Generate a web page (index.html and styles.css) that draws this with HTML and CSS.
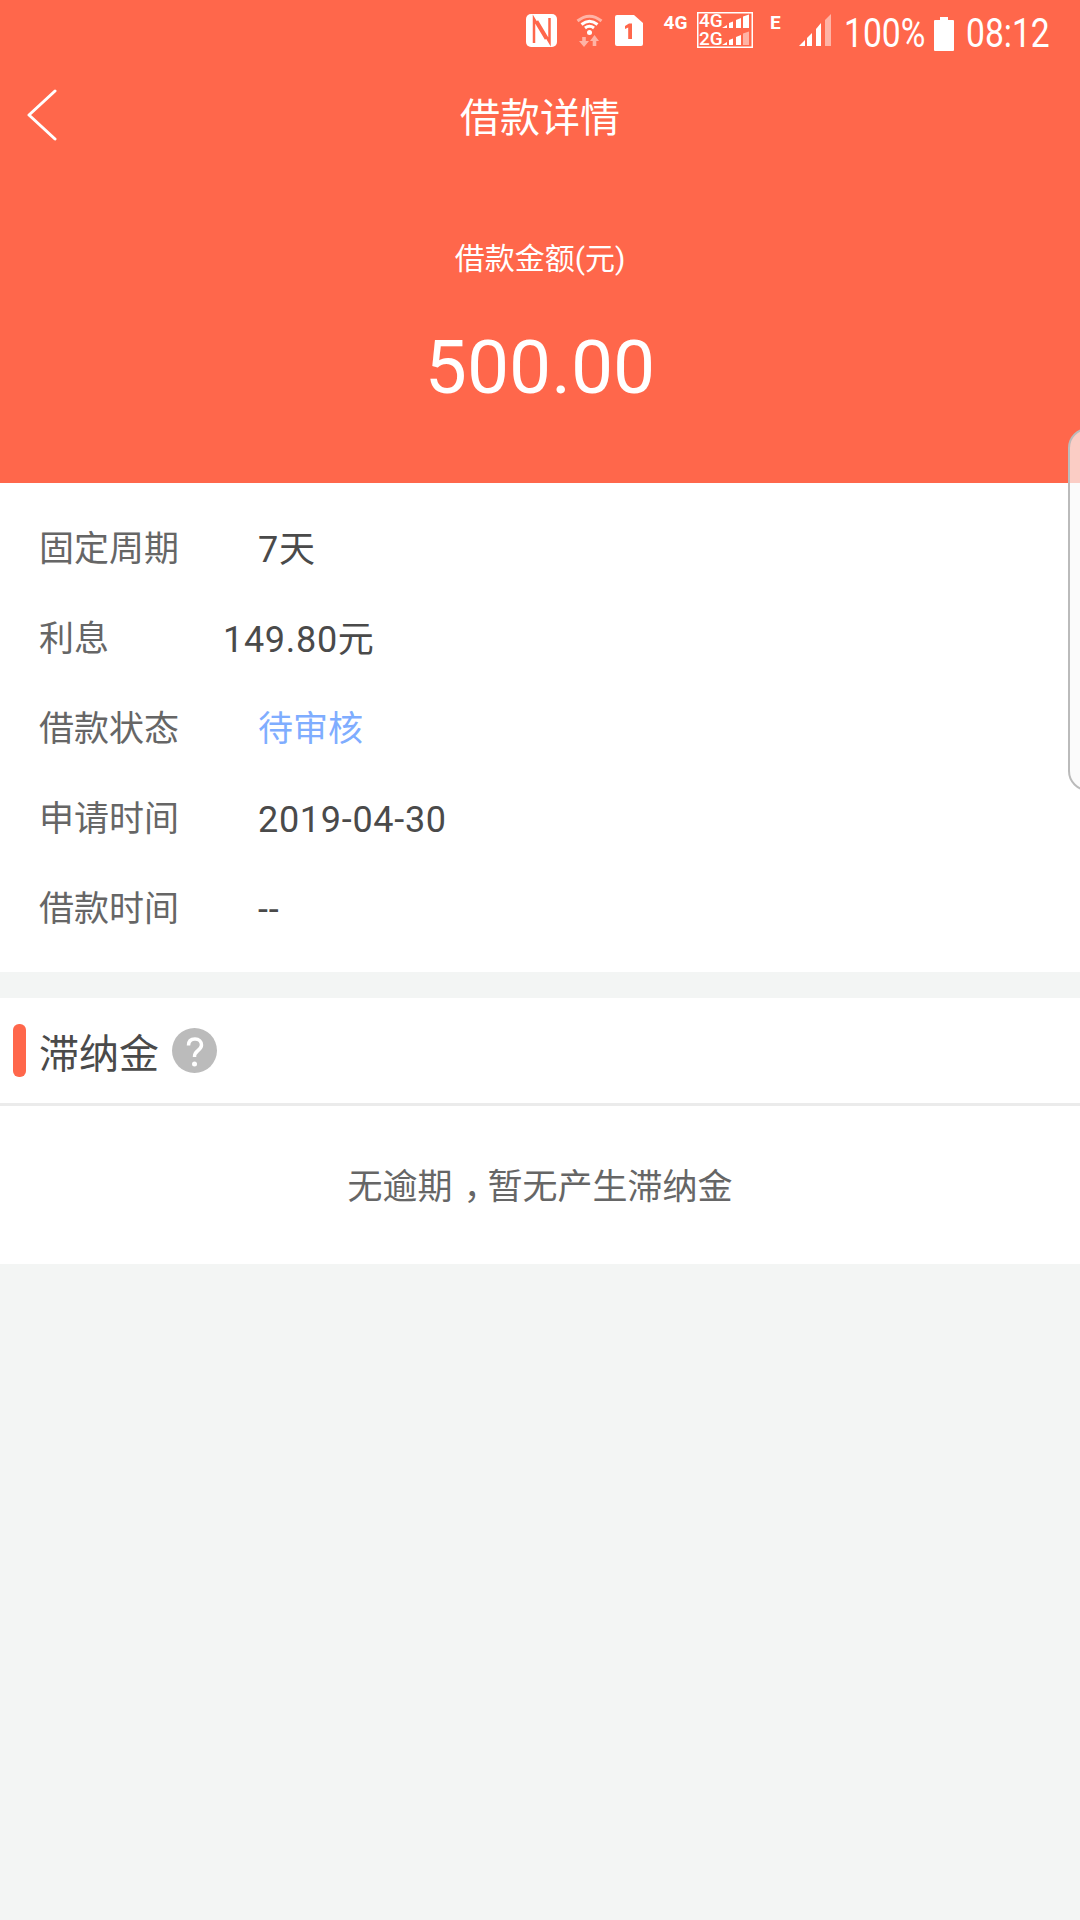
FILE: index.html
```html
<!DOCTYPE html>
<html lang="zh-CN">
<head>
    <meta charset="UTF-8">
    <meta name="viewport" content="width=device-width, initial-scale=1.0">
    <title>借款详情</title>
    <link rel="stylesheet" href="styles.css">
</head>
<body>

    <header class="cabecera">
        <div class="estado">
            <svg class="ico-nfc" width="31" height="33" viewBox="0 0 31 33">
                <rect width="31" height="33" rx="5" fill="#fff"/>
                <path d="M8 29V5L20 25" fill="none" stroke="#ff674b" stroke-width="2.500"/>
                <path d="M23.500 4V28L11 7" fill="none" stroke="#ff674b" stroke-width="2.500"/>
            </svg>
            <svg class="ico-wifi" width="27" height="33" viewBox="0 0 27 33">
                <path d="M1.500 7Q13.500 -2.500 25.500 7" fill="none" stroke="#ffb3a5" stroke-width="3"/>
                <path d="M5.500 10.500Q13.500 4 21.500 10.500" fill="none" stroke="#fff" stroke-width="3"/>
                <path d="M9 14Q13.500 10.500 18 14" fill="none" stroke="#fff" stroke-width="3"/>
                <circle cx="13.500" cy="18.500" r="2.500" fill="#fff"/>
                <path d="M8 33L3 27H6.200V23H9.800V27H13Z" fill="#ffb3a5"/>
                <path d="M18.500 21L23 27H20.300V32H16.700V27H14Z" fill="#ffb3a5"/>
            </svg>
            <svg class="ico-sim" width="28" height="31" viewBox="0 0 28 31">
                <path d="M2 0H19L28 8V29Q28 31 26 31H2Q0 31 0 29V2Q0 0 2 0Z" fill="#fff"/>
                <path d="M10 11L14 8.500H17V24H13.200V12.500L10 14Z" fill="#ff674b"/>
            </svg>
            <span class="red-4g">4G</span>
            <svg class="ico-dual" width="56" height="36" viewBox="0 0 56 36">
                <rect x="0.750" y="0.750" width="54.500" height="34.500" fill="none" stroke="#fff" stroke-width="1.500"/>
                <text class="dual-txt" x="2" y="15">4G</text>
                <text class="dual-txt" x="2" y="33">2G</text>
                <path d="M25 16L30 13V16ZM32 16V11L36 9.500V16ZM39 16V8L44 6V16ZM46 16V4.500L52 2.500V16Z" fill="#fff"/>
                <path d="M25 33L30 30V33ZM32 33V28L36 26.500V33ZM39 33V25L44 23V33Z" fill="#fff"/>
                <path d="M46 33V21.500L52 19.500V33Z" fill="#ffb3a5"/>
            </svg>
            <span class="red-e">E</span>
            <svg class="ico-senal" width="32" height="32" viewBox="0 0 32 32">
                <path d="M0 32L6 26V32Z" fill="#fff"/>
                <path d="M8 32V24L13 19V32Z" fill="#fff"/>
                <path d="M17 32V15L22 9V32Z" fill="#fff"/>
                <path d="M26 32V6L32 0V32Z" fill="#ffb3a5"/>
            </svg>
            <span class="txt-bateria"><span>100%</span></span>
            <div class="bateria"></div>
            <span class="txt-hora"><span>08:12</span></span>
        </div>

        <div class="barra">
            <svg class="atras" width="30" height="52" viewBox="0 0 30 52">
                <path d="M28 2L2 26L28 50" fill="none" stroke="#fff" stroke-width="3" stroke-linecap="round" stroke-linejoin="round"/>
            </svg>
            <h1 class="titulo">借款详情</h1>
        </div>

        <p class="sub-monto">借款金额(元)</p>
        <p class="monto">500.00</p>
    </header>

    <!-- Datos del préstamo -->
    <section class="detalle">
        <div class="fila">
            <span class="etiqueta">固定周期</span>
            <span class="valor">7天</span>
        </div>
        <div class="fila">
            <span class="etiqueta">利息</span>
            <span class="valor valor-corrido">149.80元</span>
        </div>
        <div class="fila">
            <span class="etiqueta">借款状态</span>
            <span class="valor valor-azul">待审核</span>
        </div>
        <div class="fila">
            <span class="etiqueta">申请时间</span>
            <span class="valor">2019-04-30</span>
        </div>
        <div class="fila">
            <span class="etiqueta">借款时间</span>
            <span class="valor">--</span>
        </div>
    </section>

    <section class="multa">
        <div class="multa-cabecera">
            <i class="marca"></i>
            <h2 class="multa-titulo">滞纳金</h2>
            <svg class="ayuda" width="45" height="45" viewBox="0 0 45 45">
                <circle cx="22.500" cy="22.500" r="22.500" fill="#bbb"/>
                <path d="M16.500 17.500C16.500 13 19 11 23 11C27 11 29.500 13.500 29.500 17C29.500 20 27.500 21.500 25.500 23C23.500 24.500 22.500 26 22.500 29" fill="none" stroke="#fff" stroke-width="3.500"/>
                <circle cx="22.500" cy="36" r="2.500" fill="#fff"/>
            </svg>
        </div>
        <p class="multa-texto">无逾期<span class="coma">，</span>暂无产生滞纳金</p>
    </section>

    <div class="panel-lateral"></div>

</body>
</html>
```

FILE: styles.css
```css
/* Estilos generales */
* {
    box-sizing: border-box;
}

body {
    margin: 0;
    height: 1920px;
    overflow: hidden;
    position: relative;
    background-color: #f3f5f4;
    font-family: Roboto, "Noto Sans CJK SC", sans-serif;
    color: #4a4a4a;
}

h1, h2, p {
    margin: 0;
    font-weight: 400;
}

/* Cabecera naranja */
.cabecera {
    height: 483px;
    background-color: #ff674b;
    color: #fff;
    text-align: center;
}

.estado {
    display: flex;
    align-items: flex-start;
    height: 66px;
    padding-left: 526px;
}

.ico-nfc { margin-top: 14px; }
.ico-wifi { margin: 14px 0 0 19px; }
.ico-sim { margin: 15px 0 0 12px; }
.ico-dual { margin: 12px 0 0 9px; overflow: visible; }
.ico-senal { margin: 14px 0 0 20px; }

.red-4g {
    width: 25px;
    margin: 13px 0 0 20px;
    font-size: 19px;
    font-weight: 700;
    line-height: 20px;
}

.red-e {
    width: 9px;
    margin: 13px 0 0 17px;
    font-size: 19px;
    font-weight: 700;
    line-height: 20px;
}

.dual-txt {
    font-size: 19px;
    font-weight: 500;
    fill: #fff;
}

.txt-bateria, .txt-hora {
    display: block;
    font-size: 41px;
    line-height: 66px;
    text-align: left;
    white-space: nowrap;
}

.txt-bateria span, .txt-hora span {
    display: inline-block;
    transform: scaleX(0.82);
    transform-origin: left center;
}

.txt-bateria {
    width: 78px;
    margin-left: 13px;
}

.txt-hora {
    width: 84px;
    margin-left: 12px;
}

.bateria {
    position: relative;
    width: 20px;
    height: 31px;
    margin: 20px 0 0 12px;
    background-color: #fff;
    border-radius: 1px;
}

.bateria::before {
    content: "";
    position: absolute;
    top: -3px;
    left: 6px;
    width: 8px;
    height: 3px;
    background-color: #fff;
}

.barra {
    position: relative;
    height: 100px;
    padding-top: 3px;
    line-height: 100px;
}

.atras {
    position: absolute;
    left: 27px;
    top: 23px;
}

.titulo {
    font-size: 40px;
}

.sub-monto {
    margin-top: 73px;
    font-size: 30px;
    line-height: 40px;
}

.monto {
    margin-top: 43px;
    font-size: 75px;
    line-height: 90px;
}

/* Filas de datos */
.detalle {
    height: 489px;
    padding: 22px 0 0 39px;
    background-color: #fff;
}

.fila {
    display: flex;
    align-items: center;
    height: 90px;
    font-size: 35px;
    line-height: 50px;
}

.etiqueta {
    width: 219px;
    color: #666;
}

.valor {
    font-size: 36px;
    letter-spacing: 0.7px;
}

.valor-corrido {
    margin-left: -35px;
}

.valor-azul {
    font-size: 35px;
    letter-spacing: 0;
    color: #7fadff;
}

/* Bloque de mora */
.multa {
    height: 266px;
    margin-top: 26px;
    background-color: #fff;
}

.multa-cabecera {
    display: flex;
    align-items: center;
    height: 108px;
    padding-left: 13px;
    border-bottom: 3px solid #ebebeb;
}

.marca {
    width: 13px;
    height: 53px;
    background-color: #ff674b;
    border-radius: 6px;
}

.multa-titulo {
    margin-left: 13px;
    font-size: 40px;
}

.ayuda {
    margin-left: 13px;
}

.multa-texto {
    margin-top: 57px;
    font-size: 35px;
    line-height: 50px;
    color: #666;
    text-align: center;
}

.coma {
    margin: 0 6.5px 0 11px;
    font-feature-settings: "halt";
}

/* Panel flotante del borde derecho */
.panel-lateral {
    position: absolute;
    top: 428px;
    left: 1068px;
    width: 40px;
    height: 363px;
    background-color: rgba(250, 250, 250, 0.7);
    border: 2px solid #bbb;
    border-radius: 20px;
}
```
